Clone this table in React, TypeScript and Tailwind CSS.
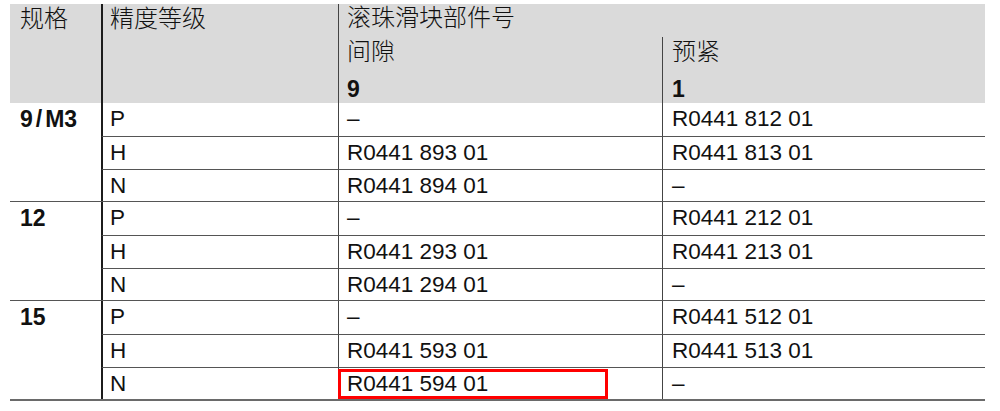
import React from "react";

const F = "font-['Liberation_Sans','Noto_Sans_CJK_SC',sans-serif]";
const CJK = "font-['Noto_Sans_CJK_SC','Liberation_Sans',sans-serif] font-light";

type Row = { grade: string; gap: string; pre: string; mark?: boolean };
type Group = { size: string; rows: Row[] };

const groups: Group[] = [
  {
    size: "9/M3",
    rows: [
      { grade: "P", gap: "–", pre: "R0441 812 01" },
      { grade: "H", gap: "R0441 893 01", pre: "R0441 813 01" },
      { grade: "N", gap: "R0441 894 01", pre: "–" },
    ],
  },
  {
    size: "12",
    rows: [
      { grade: "P", gap: "–", pre: "R0441 212 01" },
      { grade: "H", gap: "R0441 293 01", pre: "R0441 213 01" },
      { grade: "N", gap: "R0441 294 01", pre: "–" },
    ],
  },
  {
    size: "15",
    rows: [
      { grade: "P", gap: "–", pre: "R0441 512 01" },
      { grade: "H", gap: "R0441 593 01", pre: "R0441 513 01" },
      { grade: "N", gap: "R0441 594 01", pre: "–", mark: true },
    ],
  },
];

const rowStart = ["row-start-1", "row-start-2", "row-start-3"];

function Size({ s }: { s: string }) {
  if (s.includes("/")) {
    const [a, b] = s.split("/");
    return (
      <>
        {a}
        <span className="mx-[3px]">/</span>
        {b}
      </>
    );
  }
  return <>{s}</>;
}

export default function App() {
  return (
    <div className={`w-[1000px] h-[411px] bg-white text-[#111] ${F}`}>
      <div className="pl-[10px] pt-[4px] w-[985px]">
        {/* header */}
        <div className="grid grid-cols-[91px_237px_324px_323px] grid-rows-[33px_38px_28px] bg-[#dadada]">
          <div className={`row-span-3 pl-[10px] text-[24px] leading-[28px] -mt-[1px] ${CJK}`}>规格</div>
          <div className={`row-span-3 border-l-2 border-[#1c1c1c] pl-[7px] text-[24px] leading-[28px] ${CJK}`}>
            <div className="-mt-[1px]">精度等级</div>
          </div>
          <div className={`col-span-2 border-l border-[#444] pl-[8px] text-[24px] leading-[28px] ${CJK}`}>
            <div className="-mt-[2px]">滚珠滑块部件号</div>
          </div>
          <div className={`col-start-3 row-start-2 border-l border-[#444] pl-[8px] text-[24px] leading-[28px] ${CJK}`}>
            <div className="-mt-[1px]">间隙</div>
          </div>
          <div className={`col-start-4 row-start-2 border-l border-[#444] pl-[9px] text-[24px] leading-[28px] ${CJK}`}>
            <div className="-mt-[1px]">预紧</div>
          </div>
          <div className="col-start-3 row-start-3 border-l border-[#444] pl-[8px] pt-[1px] text-[23px] leading-[26px] font-bold">9</div>
          <div className="col-start-4 row-start-3 border-l border-[#444] pl-[9px] pt-[1px] text-[23px] leading-[26px] font-bold">1</div>
        </div>
        {/* body */}
        {groups.map((g, gi) => (
          <div
            key={g.size}
            className={`grid grid-cols-[91px_237px_324px_323px] grid-rows-[33px_33px_32px] text-[22.5px] leading-[28px] ${
              gi > 0 ? "border-t border-[#555]" : ""
            } ${gi === groups.length - 1 ? "border-b-2 border-b-[#6a6a6a]" : ""}`}
          >
            <div className="row-span-3 pl-[10px] pt-[2px] font-bold text-[23px]">
              <Size s={g.size} />
            </div>
            {g.rows.map((r, ri) => (
              <React.Fragment key={ri}>
                <div
                  className={`col-start-2 ${rowStart[ri]} border-l-2 border-l-[#1c1c1c] pl-[7px] pt-[2px] ${
                    ri > 0 ? "border-t border-t-[#555]" : ""
                  }`}
                >
                  {r.grade}
                </div>
                <div
                  className={`relative col-start-3 ${rowStart[ri]} border-l border-l-[#444] pl-[8px] pt-[2px] ${
                    ri > 0 ? "border-t border-t-[#555]" : ""
                  }`}
                >
                  {r.gap}
                  {r.mark && (
                    <div className="absolute left-[-1px] top-[1px] w-[270px] h-[30px] border-[3px] border-[#ff0000]" />
                  )}
                </div>
                <div
                  className={`col-start-4 ${rowStart[ri]} border-l border-l-[#444] pl-[9px] pt-[2px] ${
                    ri > 0 ? "border-t border-t-[#555]" : ""
                  }`}
                >
                  {r.pre}
                </div>
              </React.Fragment>
            ))}
          </div>
        ))}
      </div>
    </div>
  );
}
